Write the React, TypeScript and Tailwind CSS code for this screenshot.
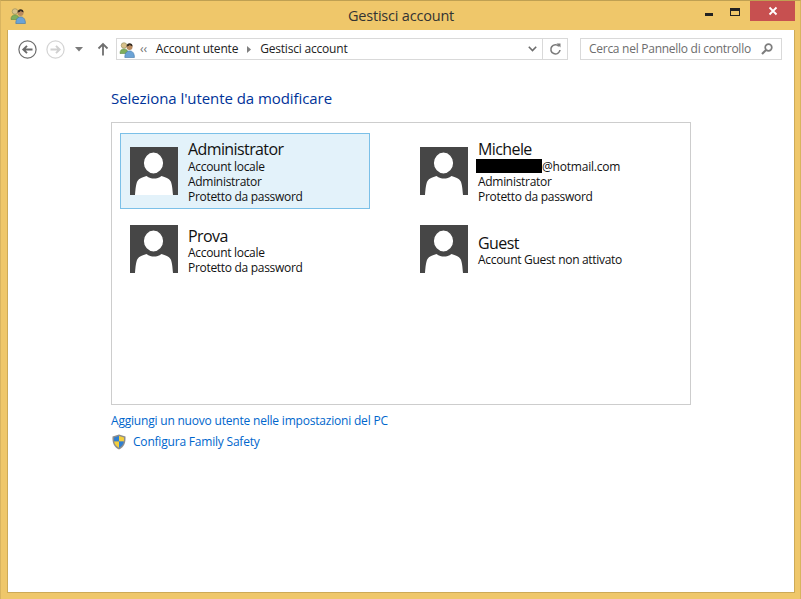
import React from "react";

const USERS = [
  { name: "Administrator", lines: ["Account locale", "Administrator", "Protetto da password"], selected: true, textClass: "pt-[1px]", nameClass: "leading-[19px]" },
  { name: "Michele", email: true, lines: ["Administrator", "Protetto da password"], textClass: "pt-[1px]", nameClass: "leading-[19px]" },
  { name: "Prova", lines: ["Account locale", "Protetto da password"], textClass: "pt-[4px]", nameClass: "leading-[18px]" },
  { name: "Guest", lines: ["Account Guest non attivato"], textClass: "pt-[2px]", nameClass: "leading-[18px]" },
];

function UsersIcon() {
  return (
    <svg width="17" height="17" viewBox="0 0 17 17" className="shrink-0">
      <circle cx="5" cy="4.5" r="2.8" fill="#d9c28c" stroke="#8f8a5a" strokeWidth="0.6" />
      <path d="M1 12.5c0-3.2 1.6-4.6 4-4.6s4 1.4 4 4.6z" fill="#7fae5c" stroke="#5d8a43" strokeWidth="0.6" />
      <circle cx="10.5" cy="6" r="3" fill="#b98a5e" />
      <path d="M7.6 5.6c0-2.3 1.3-3.4 3-3.4s3 1.1 3 3.2c-1.4-.3-2.2-1-2.8-1.6-.6.9-1.8 1.7-3.2 1.8z" fill="#33291f" />
      <path d="M5.8 16.5c0-4.4 1.8-6.6 4.8-6.6s4.8 2.2 4.8 6.6z" fill="#6ba3d6" stroke="#3f76a8" strokeWidth="0.6" />
    </svg>
  );
}

function NavCircle({ disabled }: { disabled?: boolean }) {
  const c = disabled ? "#d4d4d4" : "#6d6d6d";
  return (
    <svg width="19" height="19" viewBox="0 0 19 19" className="shrink-0">
      <circle cx="9.5" cy="9.5" r="8.6" fill="none" stroke={c} strokeWidth="1.2" />
      <path
        d={disabled ? "M4.5 9.5h9M10 5.8l3.7 3.7-3.7 3.7" : "M14.5 9.5h-9M9 5.8L5.3 9.5 9 13.2"}
        fill="none"
        stroke={disabled ? "#d0d0d0" : "#6a6a6a"}
        strokeWidth="1.9"
      />
    </svg>
  );
}

function Avatar() {
  return (
    <svg width="48" height="48" viewBox="0 0 48 48" className="shrink-0">
      <rect width="48" height="48" fill="#464646" />
      <path
        d="M5 48c.5-6 1-11.500 2.500-14 1.500-2.500 5-3.800 9-5 2.500 1.800 5 2.600 7.500 2.600s5-.8 7.500-2.600c4 1.200 7.500 2.500 9 5 1.500 2.500 2 8 2.500 14z"
        fill="#fff"
      />
      <ellipse cx="23.500" cy="16" rx="10.200" ry="11" fill="#fff" stroke="#464646" strokeWidth="1.200" />
    </svg>
  );
}

function Shield() {
  return (
    <svg width="16" height="16" viewBox="0 0 16 16" className="shrink-0">
      <path d="M8 .5l6.500 2c.3 6-1 10.500-6.500 13C2.500 13 1.200 8.500 1.500 2.500z" fill="#8d8d8d" />
      <path d="M8 2L3 3.500c0 .9 0 2.700.2 4H8z" fill="#2f7fd0" />
      <path d="M8 2l5 1.500c0 .9 0 2.700-.2 4H8z" fill="#f4cf3c" />
      <path d="M3.200 7.500H8v6.200c-2.800-1.300-4.300-3.400-4.800-6.200z" fill="#f4cf3c" />
      <path d="M12.800 7.500H8v6.200c2.800-1.300 4.300-3.400 4.800-6.200z" fill="#2f7fd0" />
    </svg>
  );
}

function UserCard({ user }: { user: (typeof USERS)[number] }) {
  return (
    <div
      className={`w-[250px] h-[76px] flex items-center pl-[9px] border ${
        user.selected ? "bg-[#e3f2fa] border-[#7bc0e8]" : "border-transparent"
      }`}
    >
      <Avatar />
      <div className={`ml-[10px] text-[12px] leading-[15px] text-[#111] tracking-[-0.3px] ${user.textClass}`}>
        <div className={`text-[16px] tracking-[-0.6px] ${user.nameClass}`}>{user.name}</div>
        {user.email && (
          <div className="flex items-center">
            <span className="w-[66px] h-[14px] bg-black ml-[-2px]" />
            <span className="tracking-[-0.2px]">@hotmail.com</span>
          </div>
        )}
        {user.lines.map((line) => (
          <div key={line}>{line}</div>
        ))}
      </div>
    </div>
  );
}

export default function App() {
  return (
    <div className="w-[801px] h-[599px] overflow-hidden flex flex-col bg-[#efc76a] border border-t-[#bfa052] border-x-[#d9b45f] border-b-0 font-['Open_Sans','Noto_Sans',sans-serif] tracking-[-0.2px]">
      {/* title bar */}
      <div className="h-[29px] shrink-0 flex items-start">
        <div className="ml-[9px] mt-[6px]">
          <UsersIcon />
        </div>
        <div className="flex-1 text-center text-[14.5px] leading-[29px] text-[#333] pl-[79px]">Gestisci account</div>
        <div className="flex items-start mr-[5px]">
          <div className="w-[26px] h-[20px] flex justify-center">
            <span className="w-[8px] h-[3px] bg-[#222] mt-[12px]" />
          </div>
          <div className="w-[25px] h-[20px] flex justify-center mr-[3px]">
            <span className="w-[10px] h-[8px] border border-t-[3px] border-[#222] mt-[7px]" />
          </div>
          <div className="w-[45px] h-[20px] bg-[#c75050] flex items-center justify-center">
            <svg width="10" height="10" viewBox="0 0 10 10">
              <path d="M1.500 1.500l7 7M8.500 1.500l-7 7" stroke="#fff" strokeWidth="1.800" />
            </svg>
          </div>
        </div>
      </div>

      {/* client area */}
      <div className="flex-1 ml-[6px] mr-[5px] mb-[6px] bg-white border-l border-r border-b border-[#cdaa57] flex flex-col">
        <div className="h-[38px] shrink-0 flex items-center pl-[10px] pr-[12px]">
          <NavCircle />
          <div className="ml-[9px]">
            <NavCircle disabled />
          </div>
          <svg width="9" height="5" viewBox="0 0 9 5" className="ml-[10px]">
            <path d="M0 0h8L4 4.500z" fill="#7b7b7b" />
          </svg>
          <svg width="12" height="14" viewBox="0 0 12 14" className="ml-[13px]">
            <path d="M6 13.500V2M1.500 6.500L6 2l4.500 4.500" fill="none" stroke="#6f6f6f" strokeWidth="1.800" />
          </svg>
          <div className="ml-[7px] w-[452px] h-[22px] border border-[#d9d9d9] flex items-center text-[12px] text-[#222]">
            <div className="ml-[2px]">
              <UsersIcon />
            </div>
            <span className="ml-[4px] text-[#6f6f6f] text-[12px] leading-none">‹‹</span>
            <span className="ml-[9px]">Account utente</span>
            <svg width="4" height="7" viewBox="0 0 4 7" className="ml-[9px] mr-[9px]">
              <path d="M0 0l4 3.500L0 7z" fill="#7f7f7f" />
            </svg>
            <span>Gestisci account</span>
            <svg width="9" height="6" viewBox="0 0 9 6" className="ml-auto mr-[5px]">
              <path d="M.8.8l3.700 3.700L8.200.8" fill="none" stroke="#6c6c6c" strokeWidth="1.600" />
            </svg>
            <div className="w-[25px] h-full border-l border-[#d9d9d9] flex items-center justify-center">
              <svg width="13" height="13" viewBox="0 0 13 13">
                <path d="M9.900 3.300A4.600 4.600 0 1 0 11 7" fill="none" stroke="#7a7a7a" strokeWidth="1.600" />
                <path d="M7.500 0.500h4v4z" fill="#7a7a7a" />
              </svg>
            </div>
          </div>
          <div className="ml-auto w-[202px] h-[22px] border border-[#d9d9d9] flex items-center pl-[8px] pr-[8px] text-[12px] text-[#6d6d6d] tracking-[-0.27px]">
            <span>Cerca nel Pannello di controllo</span>
            <svg width="12" height="12" viewBox="0 0 12 12" className="ml-auto">
              <circle cx="7.500" cy="4.500" r="3.300" fill="none" stroke="#7d7d7d" strokeWidth="1.700" />
              <path d="M5 7l-4 4" stroke="#7d7d7d" strokeWidth="2.200" />
            </svg>
          </div>
        </div>

        <div className="pl-[103px] pt-[20px]">
          <h1 className="text-[15px] leading-[20px] text-[#003399] tracking-[-0.07px]">Seleziona l'utente da modificare</h1>
          <div className="mt-[14px] w-[580px] h-[283px] border border-[#cdcdcd] pl-[8px] pt-[10px]">
            <div className="grid grid-cols-[250px_250px] gap-x-[40px] gap-y-[2px]">
              {USERS.map((user) => (
                <UserCard key={user.name} user={user} />
              ))}
            </div>
          </div>
          <div className="mt-[8px] text-[12px] leading-[16px] text-[#0066cc]">Aggiungi un nuovo utente nelle impostazioni del PC</div>
          <div className="mt-[5px] flex items-center text-[12px] leading-[16px] text-[#0066cc]">
            <Shield />
            <span className="ml-[6px]">Configura Family Safety</span>
          </div>
        </div>
      </div>
    </div>
  );
}
